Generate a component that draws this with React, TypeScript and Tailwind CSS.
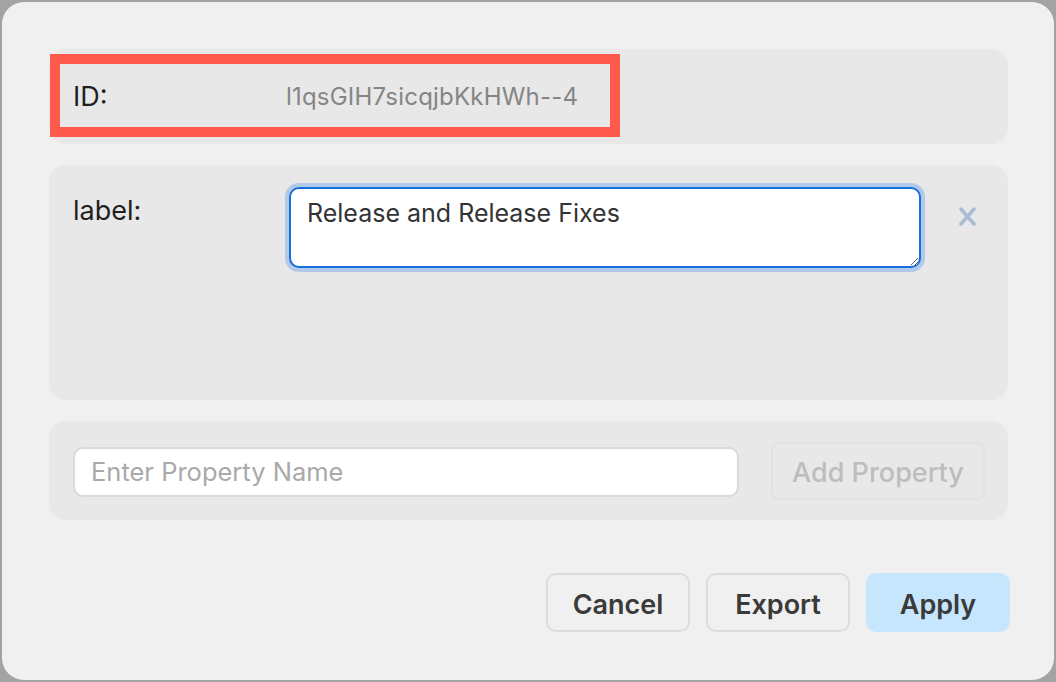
import { useState } from 'react';

const font = { fontFamily: 'Inter, "Noto Sans", "Liberation Sans", sans-serif' };

export default function App() {
  const [label, setLabel] = useState('Release and Release Fixes');
  const [propName, setPropName] = useState('');

  return (
    <div className="h-[682px] w-full bg-[#a3a3a3] pt-[2px] pl-[2px] pr-[2px] pb-[2px]" style={font}>
      <div className="flex h-full flex-col rounded-[22px] bg-[#f0f0f0] pl-[47px] pr-[46px] pt-[47px]">
        {/* ID row */}
        <div className="h-[95px] rounded-[16px] bg-[#e8e8e8] pl-[1px] pt-[5px]">
          <div className="flex h-[83px] w-[570px] items-center border-[10px] border-[#fe5a4e] pl-[13px] pt-[3px]">
            <span className="w-[213px] text-[27px] text-[#1f1f1f]">ID:</span>
            <span className="text-[24px] tracking-[0.2px] text-[#858585]">l1qsGIH7sicqjbKkHWh--4</span>
          </div>
        </div>

        {/* label property */}
        <div className="mt-[21px] flex h-[235px] items-start rounded-[16px] bg-[#e8e8e8] pl-[24px] pt-[18px]">
          <span className="mt-[10px] w-[212px] text-[27px] leading-[36px] text-[#1f1f1f]">label:</span>
          <div className="rounded-[14px] bg-[#b3c9e8] p-[4px]">
            <textarea
              value={label}
              onChange={e => setLabel(e.target.value)}
              className="block h-[81px] w-[632px] resize-y rounded-[10px] border-2 border-[#1470e0] bg-white px-[16px] pt-[8px] text-[25px] leading-[32px] text-[#333333] outline-none"
              style={font}
            />
          </div>
          <button type="button" className="ml-[33px] mt-[24px] flex h-[18px] w-[18px] items-center justify-center" aria-label="Remove">
            <svg width="17" height="19" viewBox="0 0 17 19" fill="none" stroke="#a9bcd3" strokeWidth="3.5" strokeLinecap="round">
              <path d="M2 2 L15 17 M15 2 L2 17" />
            </svg>
          </button>
        </div>

        {/* add property */}
        <div className="mt-[21px] flex h-[99px] items-center rounded-[16px] bg-[#e8e8e8] pl-[24px]">
          <input
            value={propName}
            onChange={e => setPropName(e.target.value)}
            placeholder="Enter Property Name"
            className="mt-[2px] h-[50px] w-[666px] rounded-[10px] border-2 border-[#dadada] bg-white px-[16px] text-[25.5px] text-[#333333] outline-none placeholder:text-[#a9a9a9]"
            style={font}
          />
          <button
            type="button"
            disabled
            className="ml-[32px] h-[58px] w-[214px] rounded-[8px] border-2 border-[#e2e2e2] pt-[5px] text-[27px] font-medium text-[#bdbdbd]"
          >
            Add Property
          </button>
        </div>

        {/* footer */}
        <div className="-mr-[2px] mt-[53px] flex justify-end gap-[16px]">
          <button type="button" className="h-[59px] w-[144px] rounded-[10px] border-2 border-[#dcdcdc] pt-[5px] text-[27px] font-semibold text-[#3a3a3a]">
            Cancel
          </button>
          <button type="button" className="h-[59px] w-[144px] rounded-[10px] border-2 border-[#dcdcdc] pt-[5px] text-[27px] font-semibold text-[#3a3a3a]">
            Export
          </button>
          <button type="button" className="h-[59px] w-[144px] rounded-[10px] bg-[#c5e6fd] pt-[5px] text-[27px] font-semibold text-[#3a3a3a]">
            Apply
          </button>
        </div>
      </div>
    </div>
  );
}
